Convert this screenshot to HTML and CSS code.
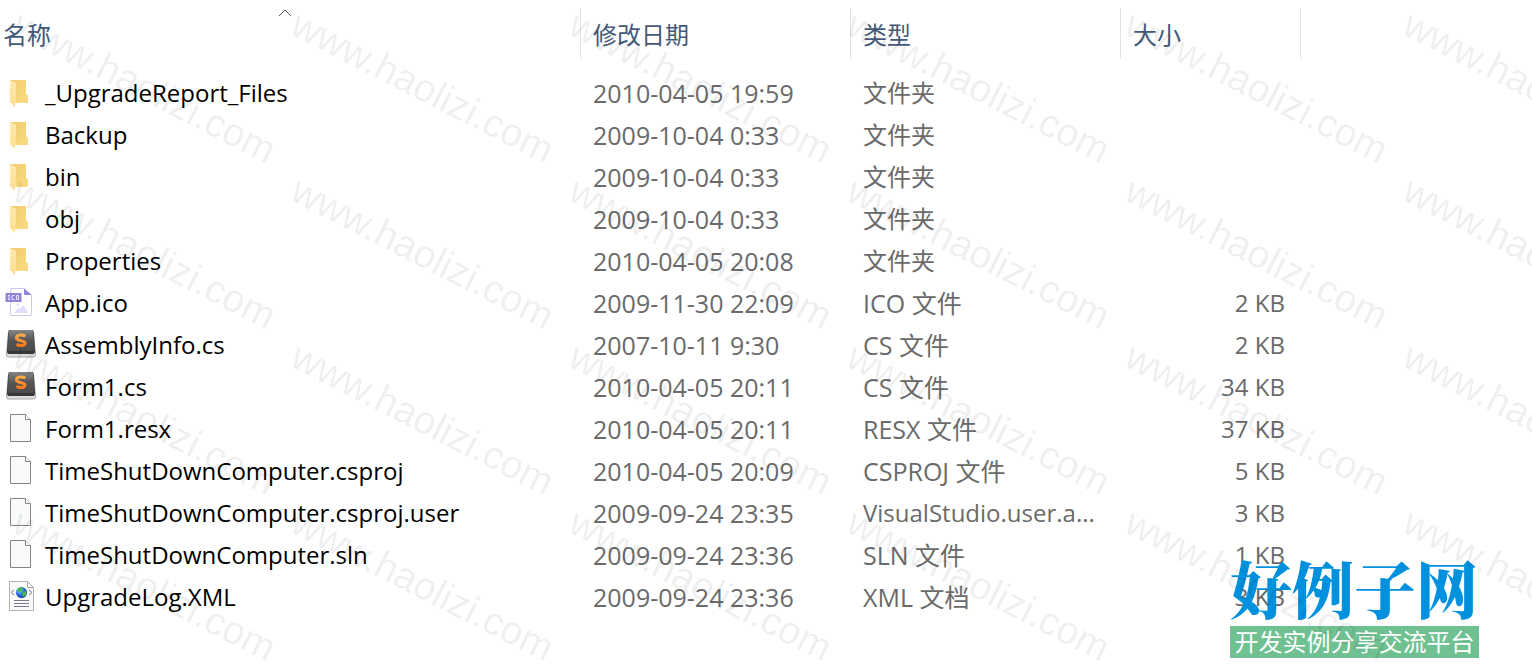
FILE: index.html
```html
<!DOCTYPE html>
<html lang="zh-CN">
<head>
<meta charset="utf-8">
<meta name="viewport" content="width=device-width, initial-scale=1">
<title>文件列表</title>
<link rel="stylesheet" href="styles.css">
</head>
<body>
<svg class="symbols" aria-hidden="true">
  <defs>
    <linearGradient id="gold" x1="0" y1="0" x2="1" y2="1"><stop offset="0" stop-color="#efcb6c"/><stop offset="1" stop-color="#fbdc85"/></linearGradient>
    <linearGradient id="flap" x1="0" y1="0" x2="0" y2="1"><stop offset="0" stop-color="#fdeab0"/><stop offset="1" stop-color="#fddf8e"/></linearGradient>
    <linearGradient id="key" x1="0" y1="0" x2="0" y2="1"><stop offset="0" stop-color="#858585"/><stop offset="0.5" stop-color="#555"/><stop offset="1" stop-color="#4b4b4b"/></linearGradient>
    <linearGradient id="orange" x1="0" y1="0" x2="0" y2="1"><stop offset="0" stop-color="#ffad4c"/><stop offset="1" stop-color="#ff7a1c"/></linearGradient>
    <radialGradient id="globe" cx="0.35" cy="0.3" r="0.8"><stop offset="0" stop-color="#8fd0ff"/><stop offset="0.5" stop-color="#2a72d8"/><stop offset="1" stop-color="#0b2f8c"/></radialGradient>
  </defs>
  <symbol id="folder" viewBox="0 0 32 32">
    <path d="M5 3H21V17L23 19V26H10V28L5 25Z" fill="url(#gold)"/>
    <path d="M5 3L11 6V25L10 26V30L5 25Z" fill="url(#flap)"/>
  </symbol>
  <symbol id="ico" viewBox="0 0 32 32">
    <path d="M7 1.500H19L26.500 8V27Q26.500 28.500 25 28.500H7Q5.500 28.500 5.500 27V3Q5.500 1.500 7 1.500Z" fill="#fff" stroke="#cdc6f3"/>
    <path d="M19 1.500L26.500 8H20Q19 8 19 7Z" fill="#8f83dc"/>
    <rect x="0.500" y="6" width="16" height="9" rx="0.500" fill="#8f83dc"/>
    <path d="M3 8.500H5M4 8.500V12.500M3 12.500H5M9.500 8.500H7.500Q7 8.500 7 9V12Q7 12.500 7.500 12.500H9.500M11.500 8.500H13.500V12.500H11.500Z" stroke="#e8e4ff" fill="none"/>
    <circle cx="13" cy="17.500" r="1.500" fill="#e9e5fb"/>
    <path d="M9 26L13 21L15 22L18 18L23 25V26Z" fill="#e1dcf8"/>
  </symbol>
  <symbol id="sublime" viewBox="0 0 32 32">
    <path d="M4 3L1.500 24V26Q1.500 28 3.500 28H28.500Q30.500 28 30.500 26V24L28 3Z" fill="#dedee2" stroke="#a6a6aa"/>
    <path d="M4 1H28L29 4L30 22Q30 25 28 25H4Q2 25 2 22L3 4Z" fill="#373737"/>
    <path d="M5 1H27Q28 1 28.500 4L29 21Q29 22 27 22H5Q3 22 3 21L3.500 4Q4 1 5 1Z" fill="url(#key)"/>
    <path d="M20.500 7C16 5 11.500 6 11.500 9C11.500 12.500 20 11 20 14C20 17 15.500 17 11.500 15.500" fill="none" stroke="url(#orange)" stroke-width="3"/>
  </symbol>
  <symbol id="file" viewBox="0 0 32 32">
    <path d="M5.500 1.500H20.500L25.500 6.500V28.500H5.500Z" fill="#f8fafb" stroke="#858585"/>
    <path d="M20.500 1.500V6.500H25.500" fill="#fff" stroke="#858585"/>
  </symbol>
  <symbol id="xml" viewBox="0 0 32 32">
    <path d="M4.500 0.500H22.500L28.500 6.500V29.500H4.500Z" fill="#fafafa" stroke="#b3b3b3"/>
    <path d="M22.500 0.500V6.500H28.500Z" fill="#fff" stroke="#aaa"/>
    <path d="M9 9L6 11.500L9 14M24 9L27 11.500L24 14" fill="none" stroke="#7b7b88"/>
    <circle cx="16.500" cy="11.500" r="5.500" fill="url(#globe)"/>
    <path d="M13 7L17 6.500L18 9L15 11L12 10ZM18 11L21.500 10L21 14L18 16L17 13Z" fill="#49b54a"/>
    <path d="M9 19.500H24M9 22.500H24M9 25.500H24" stroke="#77778c"/>
  </symbol>
</svg>

<main class="explorer">
  <table class="files">
    <colgroup><col><col class="col-date"><col class="col-type"><col class="col-size"></colgroup>
    <thead>
      <tr>
        <th scope="col" aria-sort="ascending"><button class="sort" type="button">名称<svg class="caret" viewBox="0 0 14 8" aria-hidden="true"><path d="M1 7L7 1L13 7"/></svg></button></th>
        <th scope="col"><button class="sort" type="button">修改日期</button></th>
        <th scope="col"><button class="sort" type="button">类型</button></th>
        <th scope="col"><button class="sort sort-last" type="button">大小</button></th>
      </tr>
    </thead>
    <tbody>
      <tr><td><div class="name"><svg class="icon"><use href="#folder"/></svg>_UpgradeReport_Files</div></td><td>2010-04-05 19:59</td><td class="type">文件夹</td><td class="size"></td></tr>
      <tr><td><div class="name"><svg class="icon"><use href="#folder"/></svg>Backup</div></td><td>2009-10-04 0:33</td><td class="type">文件夹</td><td class="size"></td></tr>
      <tr><td><div class="name"><svg class="icon"><use href="#folder"/></svg>bin</div></td><td>2009-10-04 0:33</td><td class="type">文件夹</td><td class="size"></td></tr>
      <tr><td><div class="name"><svg class="icon"><use href="#folder"/></svg>obj</div></td><td>2009-10-04 0:33</td><td class="type">文件夹</td><td class="size"></td></tr>
      <tr><td><div class="name"><svg class="icon"><use href="#folder"/></svg>Properties</div></td><td>2010-04-05 20:08</td><td class="type">文件夹</td><td class="size"></td></tr>
      <tr><td><div class="name"><svg class="icon"><use href="#ico"/></svg>App.ico</div></td><td>2009-11-30 22:09</td><td>ICO 文件</td><td class="size">2 KB</td></tr>
      <tr><td><div class="name"><svg class="icon"><use href="#sublime"/></svg>AssemblyInfo.cs</div></td><td>2007-10-11 9:30</td><td>CS 文件</td><td class="size">2 KB</td></tr>
      <tr><td><div class="name"><svg class="icon"><use href="#sublime"/></svg>Form1.cs</div></td><td>2010-04-05 20:11</td><td>CS 文件</td><td class="size">34 KB</td></tr>
      <tr><td><div class="name"><svg class="icon"><use href="#file"/></svg>Form1.resx</div></td><td>2010-04-05 20:11</td><td>RESX 文件</td><td class="size">37 KB</td></tr>
      <tr><td><div class="name"><svg class="icon"><use href="#file"/></svg>TimeShutDownComputer.csproj</div></td><td>2010-04-05 20:09</td><td>CSPROJ 文件</td><td class="size">5 KB</td></tr>
      <tr><td><div class="name"><svg class="icon"><use href="#file"/></svg>TimeShutDownComputer.csproj.user</div></td><td>2009-09-24 23:35</td><td class="type">VisualStudio.user.a...</td><td class="size">3 KB</td></tr>
      <tr><td><div class="name"><svg class="icon"><use href="#file"/></svg>TimeShutDownComputer.sln</div></td><td>2009-09-24 23:36</td><td>SLN 文件</td><td class="size">1 KB</td></tr>
      <tr><td><div class="name"><svg class="icon"><use href="#xml"/></svg>UpgradeLog.XML</div></td><td>2009-09-24 23:36</td><td>XML 文档</td><td class="size">3 KB</td></tr>
    </tbody>
  </table>

  <div class="brand">
    <div class="brand-name">好例子网</div>
    <div class="brand-tag">开发实例分享交流平台</div>
  </div>

  <div class="watermark" aria-hidden="true">
    <span>www.haolizi.com</span><span>www.haolizi.com</span><span>www.haolizi.com</span><span>www.haolizi.com</span><span>www.haolizi.com</span><span>www.haolizi.com</span>
    <span>www.haolizi.com</span><span>www.haolizi.com</span><span>www.haolizi.com</span><span>www.haolizi.com</span><span>www.haolizi.com</span><span>www.haolizi.com</span>
    <span>www.haolizi.com</span><span>www.haolizi.com</span><span>www.haolizi.com</span><span>www.haolizi.com</span><span>www.haolizi.com</span><span>www.haolizi.com</span>
    <span>www.haolizi.com</span><span>www.haolizi.com</span><span>www.haolizi.com</span><span>www.haolizi.com</span><span>www.haolizi.com</span><span>www.haolizi.com</span>
  </div>
</main>
</body>
</html>
```

FILE: styles.css
```css
* {
  box-sizing: border-box;
}

body {
  margin: 0;
  background: #fff;
  color: #6a6a6a;
  font-family: "Open Sans", "Noto Sans CJK SC", sans-serif;
  font-size: 25px;
}

.symbols {
  position: absolute;
  width: 0;
  height: 0;
}

.explorer {
  position: relative;
  min-height: 100vh;
  padding: 8px 231px 0 0;
  overflow: hidden;
}

.files {
  width: 100%;
  table-layout: fixed;
  border-collapse: collapse;
}

.col-date,
.col-type {
  width: 270px;
}

.col-size {
  width: 181px;
}

th {
  padding: 0 0 13px;
}

.sort {
  position: relative;
  display: block;
  width: 100%;
  height: 51px;
  padding: 0 0 0 12px;
  border: 0;
  border-left: 1px solid #e2e2e2;
  background: none;
  color: #44597a;
  font-family: "Noto Sans CJK SC", sans-serif;
  font-size: 24px;
  text-align: left;
}

th:first-child .sort {
  padding-left: 3px;
  border-left: 0;
}

.sort-last {
  border-right: 1px solid #e2e2e2;
}

.caret {
  position: absolute;
  top: 1px;
  left: 48%;
  width: 14px;
  height: 8px;
  fill: none;
  stroke: #555;
}

td {
  height: 42px;
  padding: 0 0 0 13px;
  line-height: 42px;
  white-space: nowrap;
}

td:first-child {
  padding-left: 5px;
}

.name {
  display: flex;
  align-items: center;
  gap: 8px;
  height: 42px;
  color: #000;
  font-size: 24px;
}

.icon {
  flex: none;
  width: 32px;
  height: 32px;
}

.type {
  font-size: 24px;
}

.size {
  padding-right: 16px;
  font-size: 24px;
  text-align: right;
}

.brand {
  position: absolute;
  right: 53px;
  bottom: 10px;
  width: 249px;
  font-family: "Noto Sans CJK SC", sans-serif;
  white-space: nowrap;
}

.brand-name {
  padding-bottom: 4px;
  color: #0091de;
  font-family: "Noto Serif CJK SC", "Noto Sans CJK SC", serif;
  font-size: 62px;
  font-weight: 900;
  line-height: 68px;
}

.brand-tag {
  padding-bottom: 2px;
  background: #70c191;
  color: #fff;
  font-size: 24px;
  line-height: 30px;
  text-align: center;
}

.watermark {
  position: absolute;
  top: 0;
  left: 9px;
  display: grid;
  grid-template-columns: repeat(6, 278px);
  grid-auto-rows: 166px;
  color: rgba(0, 0, 0, 0.07);
  font-family: "Liberation Sans", Arial, sans-serif;
  font-size: 39px;
  line-height: 40px;
  pointer-events: none;
}

.watermark span {
  transform: rotate(27deg);
  transform-origin: 0 36px;
}
```
